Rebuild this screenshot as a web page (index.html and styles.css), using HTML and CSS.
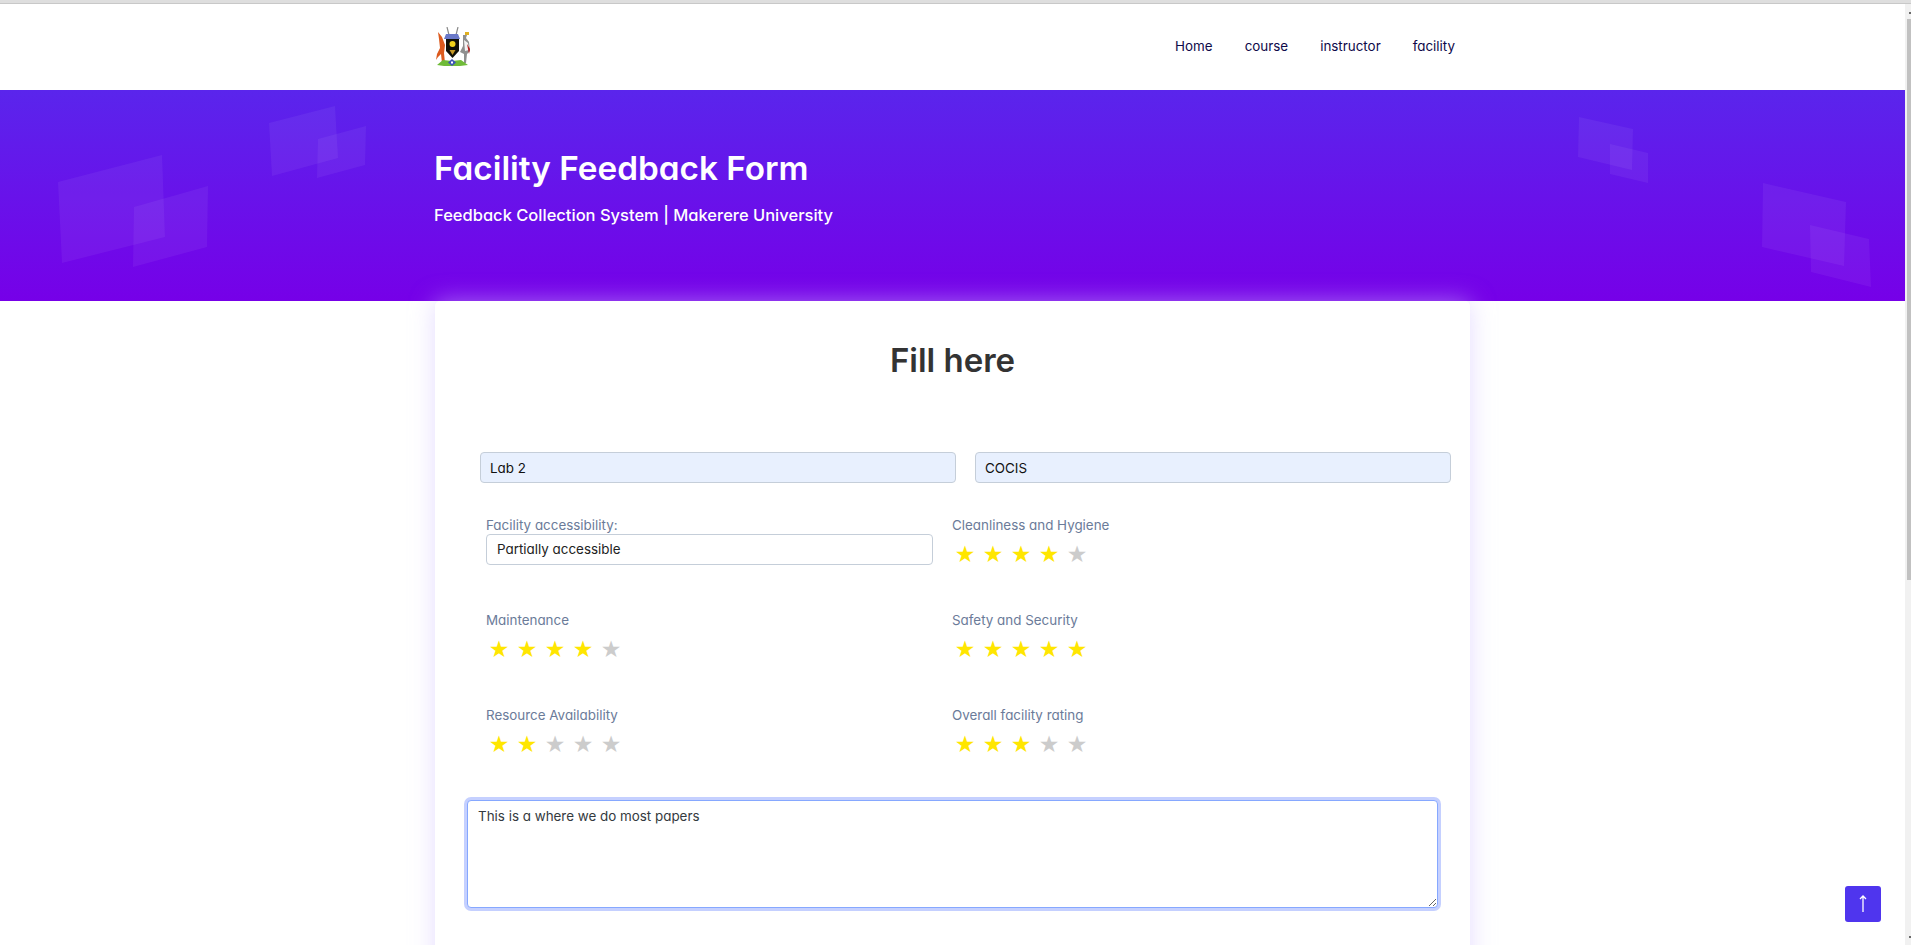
FILE: index.html
```html
<!DOCTYPE html>
<html lang="en">
<head>
    <meta charset="UTF-8">
    <meta name="viewport" content="width=device-width, initial-scale=1.0">
    <title>Facility Feedback Form</title>
    <link rel="stylesheet" href="styles.css">
</head>
<body>
    <div class="browser-edge"></div>

    <div class="viewport">
        <div class="page">
            <header class="topbar">
                <div class="wrap topbar-inner">
                    <a class="logo" href="#">
                        <svg width="37" height="40" viewBox="0 0 37 40">
                            <path d="M13 0l2 8M24 0l-2 8" stroke="#8a8a8a" stroke-width="1.2"/>
                            <path d="M4 5l4 5 3 8-1 8 1 10H8l-1-9-3 3-2 3 1-6 3-6-1-9z" fill="#dc5a1e"/>
                            <path d="M29 8h4l-1 3 3 4 1 9-3 3-1 9h-2V27l-4-2 3-6z" fill="#8f8f8f"/>
                            <path d="M30 13l4 3 1 7-4 1z" fill="#f3f3f3"/>
                            <path d="M31 5h4v3h-4z" fill="#e0b020"/>
                            <path d="M33 17l3 5-1 5z" fill="#b51c1c"/>
                            <path d="M12 7h12l2 5H10z" fill="#6a78c8"/>
                            <path d="M12 12h13v12l-6.500 7-6.500-7z" fill="#101008"/>
                            <path d="M18.500 14a3 3 0 1 1 0 6a3 3 0 1 1 0-6z" fill="#f2d21a"/>
                            <path d="M15.500 23h6l-3 5z" fill="#c79a28"/>
                            <path d="M3 38l6-5 9 1 9-1 7 5-8 1H10z" fill="#6fbb38"/>
                            <path d="M18 32l4 3.500-4 3.500-4-3.500z" fill="#3d54b8"/>
                            <path d="M17 34.500h2v2h-2z" fill="#fff"/>
                        </svg>
                    </a>
                    <nav class="mainnav">
                        <a href="#">Home</a>
                        <a href="#">course</a>
                        <a href="#">instructor</a>
                        <a href="#">facility</a>
                    </nav>
                </div>
            </header>

            <section class="hero">
                <svg class="hero-shapes" viewBox="0 0 1905 211" preserveAspectRatio="none">
                    <path d="M58 92L162 65L165 147L62 173Z"/>
                    <path d="M134 117L208 96L207 157L133 177Z"/>
                    <path d="M269 33L335 16L338 68L272 86Z"/>
                    <path d="M318 49L366 36L365 75L317 88Z"/>
                    <path d="M1579 27L1633 39L1632 80L1578 67Z"/>
                    <path d="M1610 54L1648 63L1648 93L1610 84Z"/>
                    <path d="M1763 93L1846 112L1844 176L1762 157Z"/>
                    <path d="M1810 135L1869 149L1871 197L1811 182Z"/>
                </svg>
                <div class="wrap">
                    <h1>Facility Feedback Form</h1>
                    <p>Feedback Collection System | Makerere University</p>
                </div>
            </section>

            <main class="card">
                <h2>Fill here</h2>

                <div class="name-row">
                    <input class="name-input" type="text" value="Lab 2">
                    <input class="name-input" type="text" value="COCIS">
                </div>

                <div class="questions">
                    <div class="question">
                        <label>Facility accessibility:</label>
                        <div class="select-box">Partially accessible</div>
                    </div>
                    <div class="question">
                        <label>Cleanliness and Hygiene</label>
                        <div class="stars"><span class="on">★</span><span class="on">★</span><span class="on">★</span><span class="on">★</span><span>★</span></div>
                    </div>
                    <div class="question">
                        <label>Maintenance</label>
                        <div class="stars"><span class="on">★</span><span class="on">★</span><span class="on">★</span><span class="on">★</span><span>★</span></div>
                    </div>
                    <div class="question">
                        <label>Safety and Security</label>
                        <div class="stars"><span class="on">★</span><span class="on">★</span><span class="on">★</span><span class="on">★</span><span class="on">★</span></div>
                    </div>
                    <div class="question">
                        <label>Resource Availability</label>
                        <div class="stars"><span class="on">★</span><span class="on">★</span><span>★</span><span>★</span><span>★</span></div>
                    </div>
                    <div class="question">
                        <label>Overall facility rating</label>
                        <div class="stars"><span class="on">★</span><span class="on">★</span><span class="on">★</span><span>★</span><span>★</span></div>
                    </div>
                </div>

                <textarea class="comment">This is a where we do most papers</textarea>
            </main>
        </div>

        <div class="scrollbar">
            <span class="scroll-arrow"></span>
            <span class="scroll-thumb"></span>
            <span class="scroll-arrow scroll-arrow-end"></span>
        </div>
    </div>

    <a class="back-top" href="#">
        <svg width="10" height="18" viewBox="0 0 10 18"><path d="M5 17V1M2 4l3-3 3 3" fill="none" stroke="#fff" stroke-width="1.3"/></svg>
    </a>
</body>
</html>
```

FILE: styles.css
```css
html, body {
    height: 100%;
    overflow: hidden;
}
body {
    font-family: Inter, "Open Sans", sans-serif;
    font-feature-settings: "cv11";
    display: flex;
    flex-direction: column;
    margin: 0;
    background-color: #fff;
    color: #333;
}
.browser-edge {
    flex: none;
    height: 3px;
    background-color: #dedede;
    border-bottom: 1px solid #c8c8c8;
}
.viewport {
    display: flex;
    flex: 1;
    min-height: 0;
}
.page {
    flex: 1;
    min-width: 0;
    overflow: hidden;
}
.scrollbar {
    display: flex;
    flex: none;
    flex-direction: column;
    width: 6px;
    background-color: #f1f1f1;
}
.scroll-arrow {
    flex: none;
    align-self: flex-end;
    width: 2px;
    height: 2px;
    margin-top: 8px;
    background-color: #6a6a6a;
}
.scroll-thumb {
    flex: none;
    align-self: flex-end;
    width: 4px;
    height: 561px;
    margin-top: 5px;
    background-color: #c1c1c1;
}
.scroll-arrow-end {
    margin-top: auto;
    margin-bottom: 7px;
}
.wrap {
    width: 1035px;
    margin: 0 auto;
}
.topbar {
    height: 86px;
    background-color: #fff;
}
.topbar-inner {
    display: flex;
    justify-content: space-between;
    align-items: center;
    height: 100%;
    padding-right: 15px;
    box-sizing: border-box;
}
.logo {
    display: block;
    height: 40px;
    margin-left: -1px;
}
.mainnav {
    display: flex;
    gap: 32px;
    margin-bottom: 2px;
}
.mainnav a {
    color: #0f0a4a;
    font-size: 13.4px;
    text-decoration: none;
}
.hero {
    position: relative;
    height: 211px;
    background: linear-gradient(180deg, #5a25ec 0%, #7600e8 100%);
    color: #fff;
    overflow: hidden;
}
.hero-shapes {
    position: absolute;
    top: 0;
    left: 0;
    width: 100%;
    height: 100%;
    fill: rgba(255, 255, 255, 0.055);
}
.hero .wrap {
    position: relative;
    padding-top: 56px;
}
.hero h1 {
    margin: 0 0 0 -1px;
    font-size: 33.300px;
    font-weight: 600;
    line-height: 44px;
}
.hero p {
    margin: 13px 0 0 -1px;
    font-size: 16.500px;
    font-weight: 500;
    line-height: 24px;
}
.card {
    position: relative;
    box-sizing: border-box;
    width: 1035px;
    height: 700px;
    margin: 0 auto;
    background-color: #fff;
    border-radius: 5px;
    box-shadow: 0 0 24px rgba(205, 190, 255, 0.55);
}
.card h2 {
    margin: 0;
    padding-top: 37px;
    text-align: center;
    font-size: 33px;
    font-weight: 600;
    line-height: 44px;
    color: #333;
}
.name-row {
    display: flex;
    gap: 19px;
    margin: 70px 19px 0 45px;
}
.name-input {
    flex: 1;
    min-width: 0;
    box-sizing: border-box;
    height: 31px;
    padding: 0 9px;
    border: 1px solid #c5ced9;
    border-radius: 4px;
    background-color: #e8f0fe;
    font: inherit;
    font-size: 13.4px;
    color: #111;
}
.questions {
    display: grid;
    grid-template-columns: 466px 1fr;
    grid-template-rows: 95px 95px 81px;
    margin: 33px 0 0 51px;
}
.question label {
    display: block;
    font-size: 13.4px;
    line-height: 18px;
    color: #6b7b99;
}
.select-box {
    box-sizing: border-box;
    width: 447px;
    height: 31px;
    padding-left: 10px;
    border: 1px solid #c5ced9;
    border-radius: 4px;
    font-size: 13.4px;
    line-height: 29px;
    color: #222;
}
.stars {
    display: flex;
    margin: 5px 0 0 -1px;
    font-family: "DejaVu Sans", sans-serif;
    font-size: 23px;
    line-height: 30px;
    color: #ccc;
}
.stars span {
    width: 28px;
    text-align: center;
}
.stars .on {
    color: #ffe600;
}
.comment {
    display: block;
    box-sizing: border-box;
    width: 971px;
    height: 108px;
    margin: 13px 0 0 32px;
    padding: 5px 10px;
    border: 1px solid #86a8ff;
    border-radius: 4px;
    box-shadow: 0 0 0 3px #c5d0ff;
    outline: none;
    font: inherit;
    font-size: 13.4px;
    line-height: 20px;
    color: #343a40;
}
.back-top {
    position: fixed;
    right: 30px;
    bottom: 23px;
    display: flex;
    align-items: center;
    justify-content: center;
    width: 36px;
    height: 36px;
    border-radius: 3px;
    background-color: #4f35ee;
}
```
